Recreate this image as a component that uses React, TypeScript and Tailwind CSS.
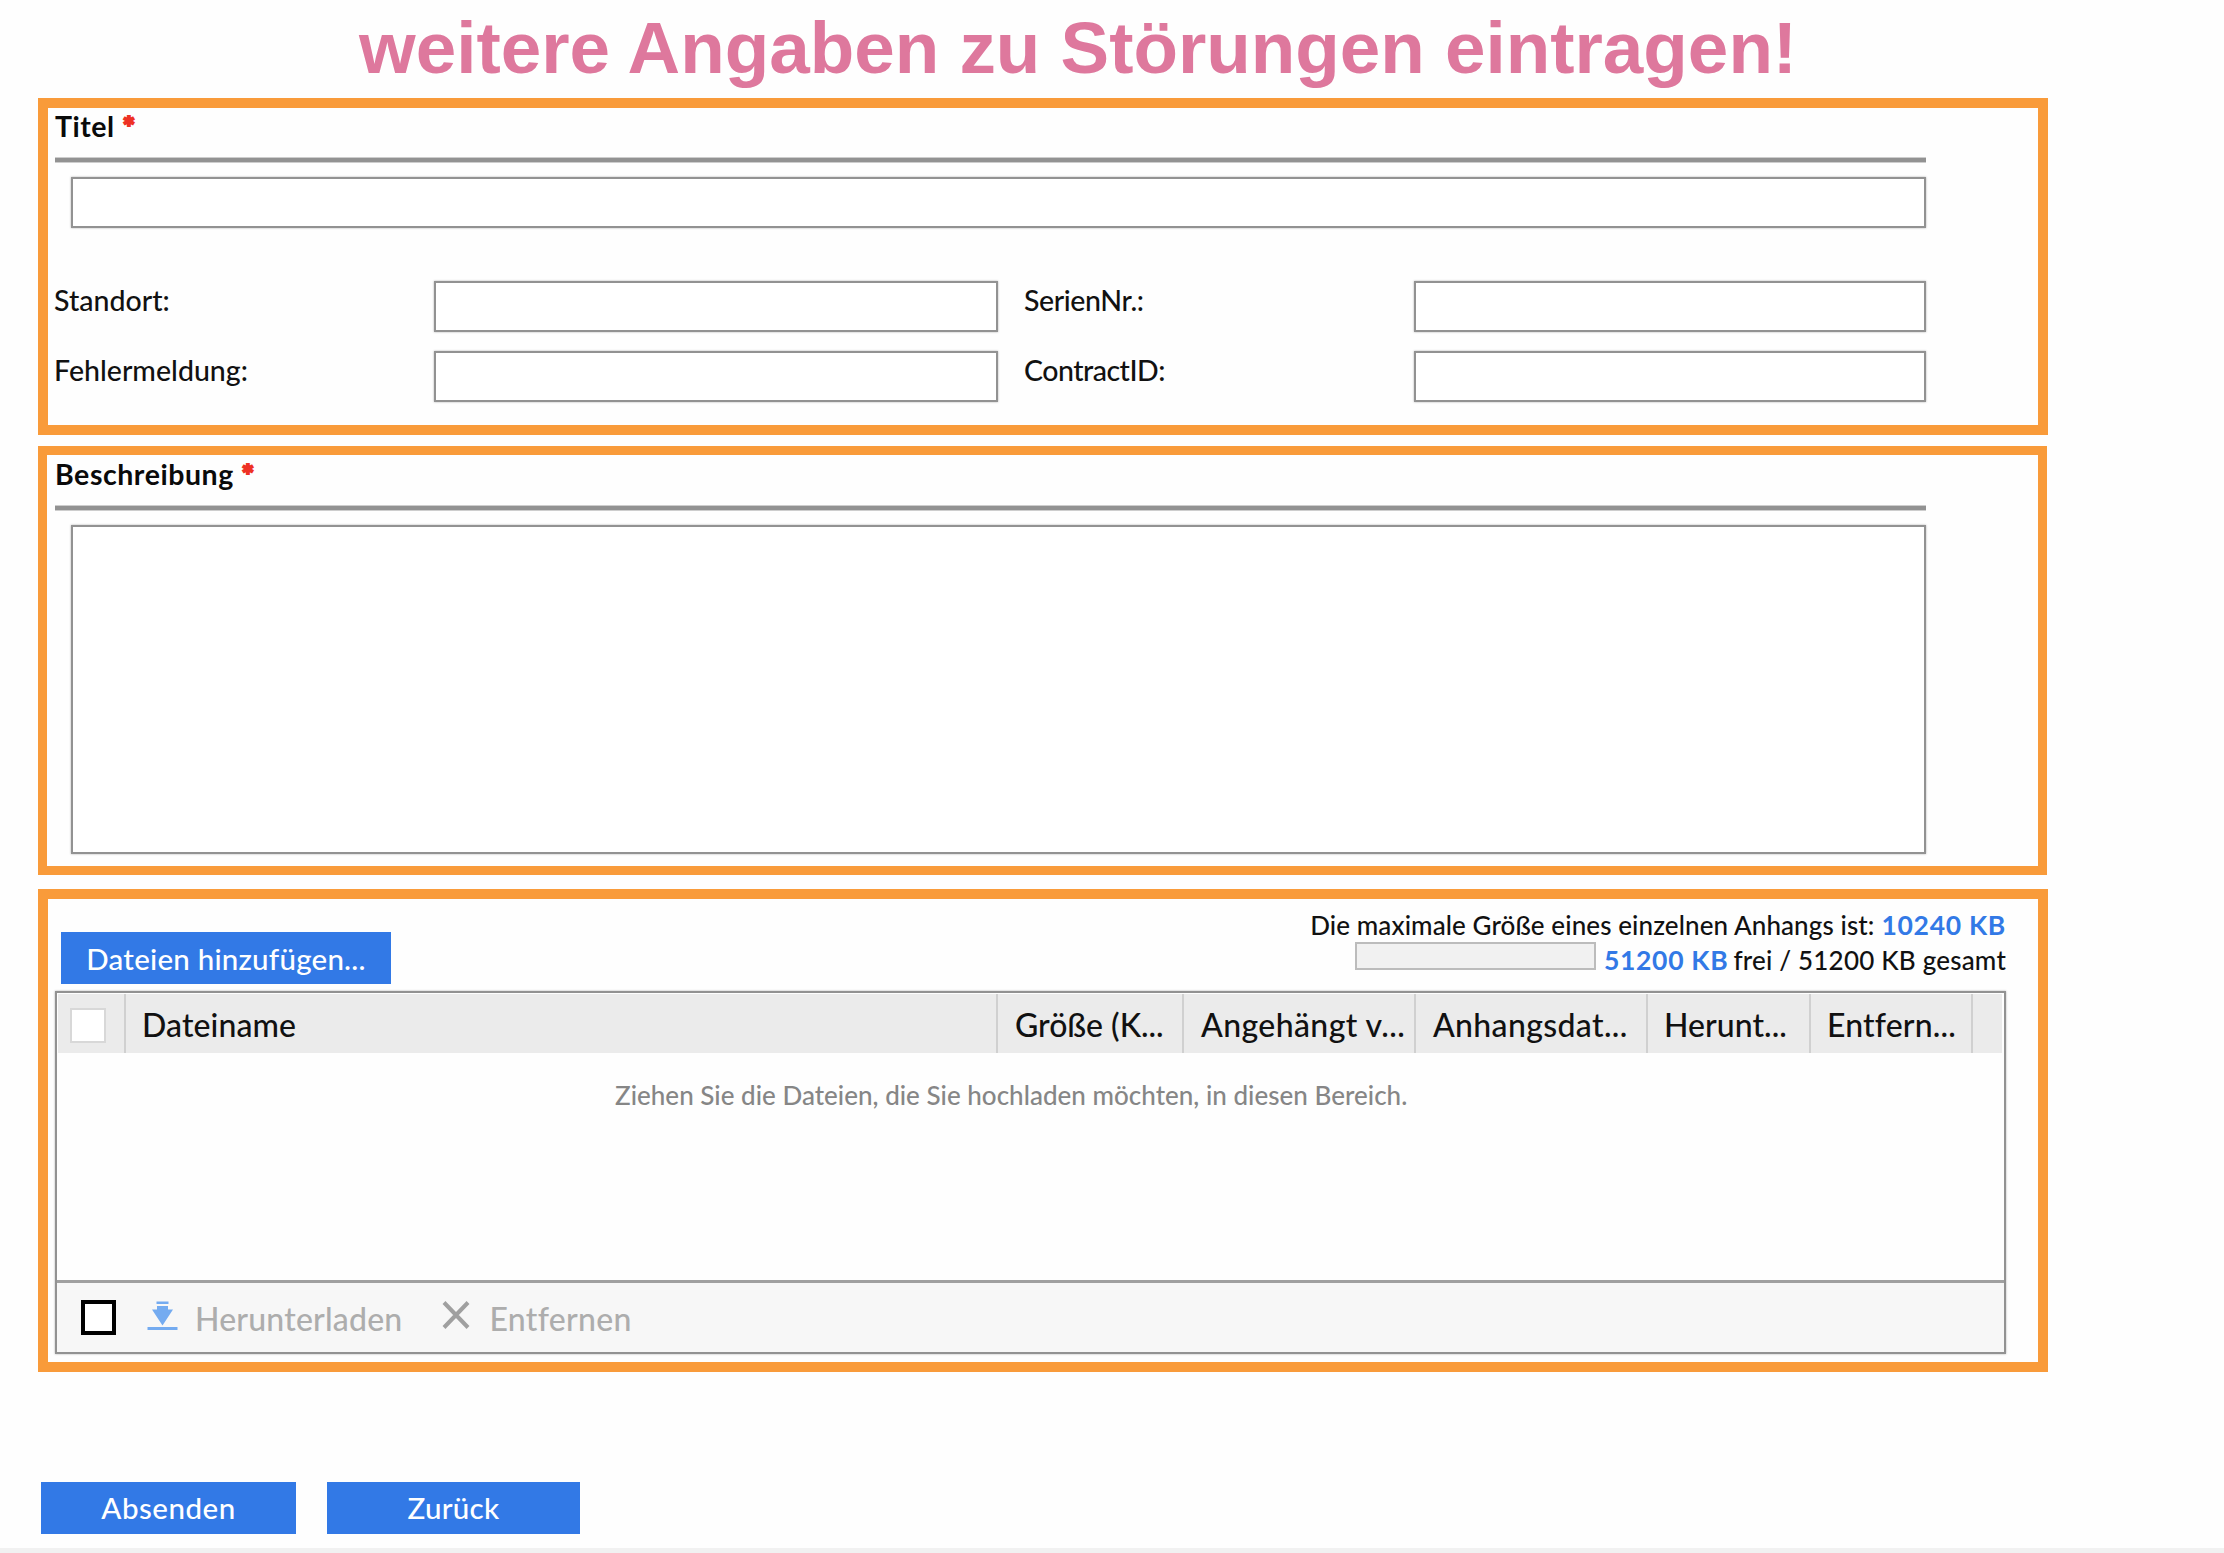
import type { ReactNode } from 'react';

const field = 'border-2 border-[#929292] bg-white shadow-[0_0_2px_#b0b0b0] outline-none resize-none block';

function SectionTitle({ children }: { children: ReactNode }) {
  return (
    <h2 className="flex h-[34px] text-[28.5px] leading-[34px] font-bold tracking-[0.55px] text-[#0a0a0a]">
      {children}
      <span className="ml-[8px] text-[29px] leading-[33px] font-black tracking-normal text-[#ee3124] [-webkit-text-stroke:2px_#ee3124]">*</span>
    </h2>
  );
}

function Rule() {
  return <div className="h-1 w-[1871px] bg-[#929292] shadow-[0_1px_0_#cdcdcd,0_-1px_0_#cdcdcd]" />;
}

function DownloadIcon() {
  return (
    <svg width="31" height="30" viewBox="0 0 31 30" fill="#74abf0" aria-hidden="true">
      <path d="M9.5 0.5h12v2.5h-12z" />
      <path d="M10 5h11v3.5h5L15.5 24.5 5 8.5h5z" />
      <path d="M0.5 26h30v3h-30z" />
    </svg>
  );
}

function CrossIcon() {
  return (
    <svg width="28" height="28" viewBox="0 0 28 28" fill="none" stroke="#a0a0a0" strokeWidth="4" aria-hidden="true">
      <path d="M2 1.5 26 26.5M26 1.5 2 26.5" />
    </svg>
  );
}

const headCell = 'h-[59px] border-r-2 border-[#d0d0d0] pt-[11px] pl-[16px] whitespace-nowrap overflow-hidden';

export default function App() {
  return (
    <main className="flex h-[1553px] w-[2224px] flex-col overflow-hidden bg-[#fefefe] font-['Lato',sans-serif] font-medium text-[#111]">
      <h1 className="h-[98px] shrink-0 pt-[7px] pl-[359px] font-['Liberation_Sans',sans-serif] text-[72.85px] leading-[82px] font-bold whitespace-nowrap text-[#de789d]">
        weitere Angaben zu Störungen eintragen!
      </h1>

      <section className="ml-[38px] h-[337px] w-[2010px] shrink-0 border-10 border-[#f99b3a] pt-px pl-[7px]">
        <SectionTitle>Titel</SectionTitle>
        <div className="pt-[15px]">
          <Rule />
        </div>
        <input className={`${field} mt-[15px] ml-4 h-[51px] w-[1855px]`} />
        <div className="mt-[53px] grid grid-cols-[379px_564px_416px_512px] gap-y-[19px] text-[28.5px] leading-[34px]">
          <label className="-ml-px pt-[2px] tracking-[0.02px]">Standort:</label>
          <input className={`${field} h-[51px] w-full`} />
          <label className="pt-[2px] pl-[26px] tracking-[-0.4px]">SerienNr.:</label>
          <input className={`${field} h-[51px] w-full`} />
          <label className="-ml-px pt-[2px] tracking-[0.02px]">Fehlermeldung:</label>
          <input className={`${field} h-[51px] w-full`} />
          <label className="pt-[2px] pl-[26px] tracking-[-0.5px]">ContractID:</label>
          <input className={`${field} h-[51px] w-full`} />
        </div>
      </section>

      <section className="mt-[11px] ml-[38px] h-[429px] w-[2009px] shrink-0 border-9 border-[#f99b3a] pt-[2px] pl-[8px]">
        <SectionTitle>Beschreibung</SectionTitle>
        <div className="pt-[15px]">
          <Rule />
        </div>
        <textarea className={`${field} mt-[15px] ml-4 h-[329px] w-[1855px]`} />
      </section>

      <section className="mt-[14px] ml-[38px] flex h-[483px] w-[2010px] shrink-0 flex-col border-10 border-[#f99b3a] pl-[7px]">
        <div className="flex h-[92px] w-[1951px] shrink-0 justify-between">
          <button className="mt-[33px] ml-[6px] h-[52px] w-[330px] bg-[#3279e6] text-[29.5px] leading-[53px] tracking-[0.22px] whitespace-nowrap text-white">
            Dateien hinzufügen...
          </button>
          <div className="flex flex-col items-end pt-[9px] text-[26px] leading-[35px] whitespace-nowrap">
            <div className="flex gap-[7px]">
              <span className="tracking-[0.1px]">Die maximale Größe eines einzelnen Anhangs ist:</span>
              <strong className="text-[26.5px] font-bold tracking-[0.7px] text-[#3279e6]">10240 KB</strong>
            </div>
            <div className="flex">
              <div className="mt-[-1px] mr-[8px] h-[28px] w-[241px] border-2 border-[#bcbcbc] bg-[#f1f1f1]" />
              <strong className="mr-[5px] text-[26.5px] font-bold tracking-[0.7px] text-[#3279e6]">51200 KB</strong>
              <span className="tracking-[0.2px]">frei / 51200 KB gesamt</span>
            </div>
          </div>
        </div>

        <div className="flex h-[363px] w-[1951px] flex-col border-2 border-[#929292] shadow-[0_0_2px_#b0b0b0]">
          <div className="mx-px mt-px grid h-[59px] w-[1944px] shrink-0 grid-cols-[68px_872px_186px_232px_232px_163px_162px_1fr] bg-[#ebebeb] text-[32px] leading-[40px]">
            <div className="h-[59px] border-r-2 border-[#d0d0d0] pt-[14px] pl-[12px]">
              <div className="h-[35px] w-[36px] border-2 border-[#d8d8d8] bg-white" />
            </div>
            <div className={`${headCell} tracking-[0.1px]`}>Dateiname</div>
            <div className={`${headCell} pl-[17px] tracking-[-0.02px]`}>Größe (K...</div>
            <div className={`${headCell} pl-[17px] tracking-[0.4px]`}>Angehängt v...</div>
            <div className={`${headCell} pl-[17px] tracking-[0.35px]`}>Anhangsdat...</div>
            <div className={`${headCell} tracking-[0.05px]`}>Herunt...</div>
            <div className={`${headCell} tracking-[0.15px]`}>Entfern...</div>
          </div>
          <p className="grow pt-[27px] pl-[558px] text-[26px] leading-[30px] tracking-[0.02px] text-[#868686]">
            Ziehen Sie die Dateien, die Sie hochladen möchten, in diesen Bereich.
          </p>
          <div className="flex h-[72px] shrink-0 items-start border-t-3 border-[#a0a0a0] bg-[#f7f7f7] pl-[24px] text-[32px] leading-[40px] text-[#adadad]">
            <div className="mt-[17px] h-[35px] w-[35px] border-4 border-black bg-white" />
            <div className="mt-[18px] ml-[31px]">
              <DownloadIcon />
            </div>
            <span className="mt-[16px] ml-[17px] tracking-[0.2px]">Herunterladen</span>
            <div className="mt-[18px] ml-[40px]">
              <CrossIcon />
            </div>
            <span className="mt-[16px] ml-[19px] tracking-[0.3px]">Entfernen</span>
          </div>
        </div>
      </section>

      <div className="mt-[110px] ml-[41px] flex shrink-0 gap-[31px] text-[29.5px] leading-[52px] text-white">
        <button className="h-[52px] w-[255px] bg-[#3279e6] tracking-[0.5px]">Absenden</button>
        <button className="h-[52px] w-[253px] bg-[#3279e6] tracking-[0.3px]">Zurück</button>
      </div>
      <div className="mt-auto h-[5px] shrink-0 bg-[#f1f1f1]" />
    </main>
  );
}
